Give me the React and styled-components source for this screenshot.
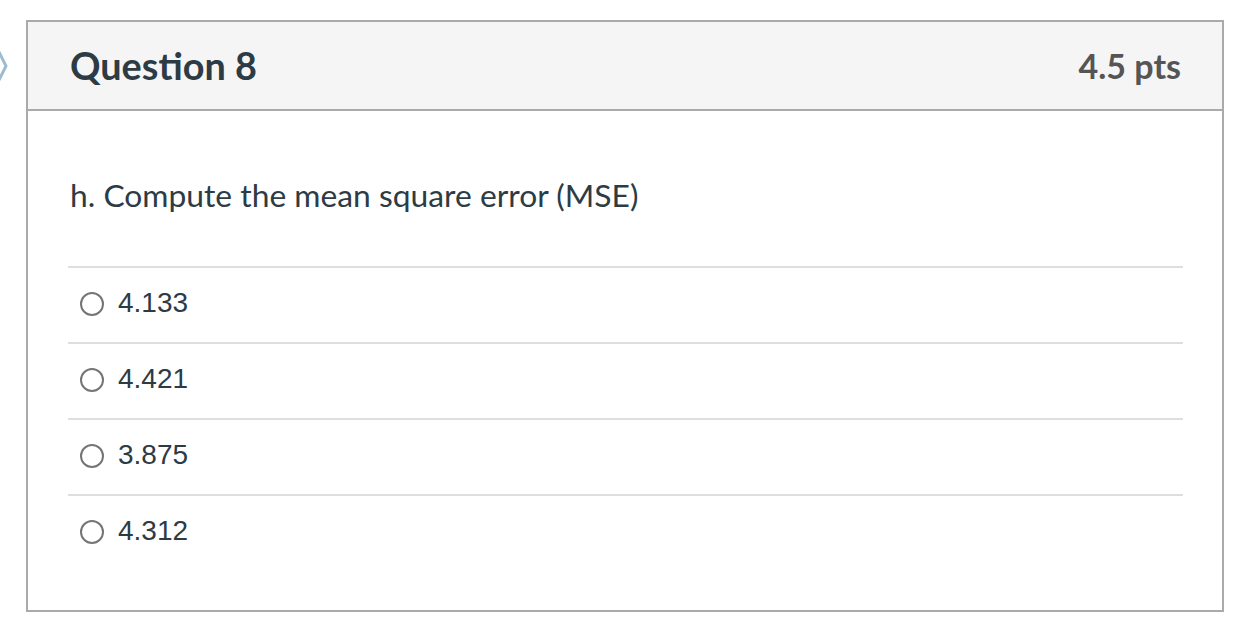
import React from 'react';
import styled, { createGlobalStyle } from 'styled-components';

const GlobalStyle = createGlobalStyle`
  html, body {
    margin: 0;
    padding: 0;
    background: #fff;
  }
  body {
    font-family: 'Lato', 'Liberation Sans', sans-serif;
    color: #2d3b45;
  }
`;

const Page = styled.div`
  position: relative;
  padding: 20px 22px 24px 26px;
`;

const Flag = styled.svg`
  position: absolute;
  left: -28px;
  top: 44px;
`;

const Card = styled.div`
  border: 2px solid #aaaaaa;
  background: #fff;
`;

const Header = styled.div`
  display: flex;
  justify-content: space-between;
  align-items: center;
  height: 87px;
  padding: 0 41px 0 42px;
  background: #f5f5f5;
  border-bottom: 2px solid #aaaaaa;
`;

const Title = styled.h2`
  margin: 0;
  font-size: 37.8px;
  font-weight: 700;
  color: #2d3b45;
`;

const Points = styled.div`
  font-size: 34px;
  font-weight: 700;
  color: #555;
`;

const Body = styled.div`
  padding: 63px 39px 40px 40px;
`;

const QuestionText = styled.p`
  margin: 0 0 50px 2px;
  font-size: 31.8px;
  line-height: 42px;
  color: #2d3b45;
`;

const Answers = styled.div`
  display: flex;
  flex-direction: column;
`;

const Answer = styled.label`
  display: flex;
  align-items: center;
  gap: 14px;
  box-sizing: content-box;
  height: 70px;
  padding: 0 0 4px 12px;
  border-top: 2px solid #dedede;
  cursor: pointer;
`;

const Radio = styled.span`
  width: 20px;
  height: 20px;
  margin-top: 2px;
  border: 2px solid #757575;
  border-radius: 50%;
  flex-shrink: 0;
`;

const AnswerText = styled.span`
  font-family: 'Liberation Sans', Arial, sans-serif;
  font-size: 28px;
  color: #2d3b45;
`;

const answers = ['4.133', '4.421', '3.875', '4.312'];

export default function App() {
  return (
    <>
      <GlobalStyle />
      <Page>
        <Flag width="40" height="44" viewBox="0 0 40 44">
          <path
            d="M2 2 H24 L34 22 L24 42 H2 Z"
            fill="none"
            stroke="#9dbcd2"
            strokeWidth="3"
            strokeLinejoin="round"
          />
        </Flag>
        <Card>
          <Header>
            <Title>Question 8</Title>
            <Points>4.5 pts</Points>
          </Header>
          <Body>
            <QuestionText>h. Compute the mean square error (MSE)</QuestionText>
            <Answers>
              {answers.map((a) => (
                <Answer key={a}>
                  <Radio />
                  <AnswerText>{a}</AnswerText>
                </Answer>
              ))}
            </Answers>
          </Body>
        </Card>
      </Page>
    </>
  );
}
